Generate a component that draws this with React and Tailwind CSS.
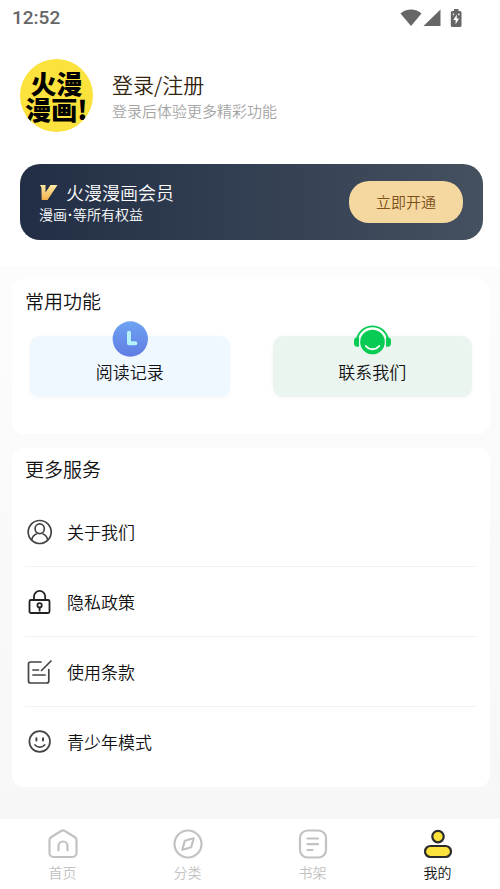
const StatusBar = () => (
  <div className="flex h-9 items-center justify-between pl-3 pr-[37px] text-[#666666]">
    <span className="font-['Roboto',sans-serif] text-[19px] font-medium leading-6">12:52</span>
    <div className="flex items-center" aria-hidden="true">
      <svg width="22" height="18" viewBox="0 0 22 18" fill="currentColor">
        <path d="M11 17 .5 4.5C3.400 2 7 .6 11 .6s7.600 1.400 10.500 3.900Z" />
      </svg>
      <svg className="ml-px" width="18" height="18" viewBox="0 0 18 18" fill="currentColor">
        <path d="M17.500.5V17H.5Z" />
      </svg>
      <svg className="ml-2" width="14" height="18" viewBox="0 0 14 18">
        <path fill="currentColor" d="M5 0h4.500v2H11a1.500 1.500 0 0 1 1.500 1.500v13A1.500 1.500 0 0 1 11 18H3.300a1.500 1.500 0 0 1-1.500-1.500v-13A1.500 1.500 0 0 1 3.300 2H5Z" />
        <path fill="#fff" d="M7.800 5.500 4.300 11h2.300v4.200L10.100 9.500H7.800ZM3.300 4.800h2.200L4.500 6.600ZM8.800 4.800h2.200L9.800 6.800Z" />
      </svg>
    </div>
  </div>
);

const VipIcon = () => (
  <svg width="19" height="18" viewBox="0 0 19 18" aria-hidden="true">
    <defs>
      <linearGradient id="vip" x1="0" y1="0" x2="0" y2="1">
        <stop offset="0" stopColor="#fdeaa5" />
        <stop offset="1" stopColor="#f3b04a" />
      </linearGradient>
    </defs>
    <path fill="url(#vip)" d="M1 2h5.500v7.500L11.500 2h7L16.500 5 8.500 17H2.700L2.400 4.500Z" />
  </svg>
);

const ClockIcon = () => (
  <svg width="40" height="36" viewBox="0 0 40 36" aria-hidden="true">
    <defs>
      <linearGradient id="clock" x1="0" y1="0" x2="0" y2="1">
        <stop offset="0" stopColor="#6ea3f2" />
        <stop offset="1" stopColor="#5f7ce3" />
      </linearGradient>
    </defs>
    <circle cx="20.300" cy="18" r="17.700" fill="url(#clock)" />
    <path d="M19 11.800v10.400h6.400" fill="none" stroke="#b5f3fb" strokeWidth="4" strokeLinecap="round" strokeLinejoin="round" />
  </svg>
);

const SupportIcon = () => (
  <svg width="40" height="36" viewBox="0 0 40 36" aria-hidden="true">
    <g fill="#07cb52">
      <circle cx="20.500" cy="21" r="12.300" />
      <path d="M7 16.200v9.600H5.500A3.500 3.500 0 0 1 2 22.300v-2.600a3.500 3.500 0 0 1 3.500-3.500ZM34 16.200v9.600h1.500a3.500 3.500 0 0 0 3.500-3.500v-2.600a3.500 3.500 0 0 0-3.500-3.500Z" />
    </g>
    <path d="M5.200 17.500a15.700 15.700 0 0 1 30.600 0" fill="none" stroke="#07cb52" strokeWidth="1.800" />
    <path d="M13.800 25c3.500 4.300 9.900 4.300 13.400 0" fill="none" stroke="#fff" strokeWidth="1.800" strokeLinecap="round" />
  </svg>
);

const AboutIcon = () => (
  <svg width="28" height="28" viewBox="-1 0 28 28" fill="none" stroke="#444" strokeWidth="1.700" aria-hidden="true">
    <circle cx="13.700" cy="14" r="11.500" />
    <ellipse cx="13.700" cy="10.800" rx="4.600" ry="4.900" />
    <path d="M5.700 22c.6-3.300 2.500-5.300 5.300-6.200M21.700 22c-.6-3.300-2.500-5.300-5.300-6.200" />
  </svg>
);

const LockIcon = () => (
  <svg width="28" height="28" viewBox="-1 0 28 28" fill="none" stroke="#222" strokeWidth="1.800" aria-hidden="true">
    <rect x="3.500" y="12" width="20" height="13" rx="1.500" />
    <path d="M8 12V8.500a5.600 5.600 0 0 1 11.200 0V12" />
    <circle cx="13.600" cy="17.300" r="2.200" />
    <path d="M13.600 19.500v4" />
  </svg>
);

const TermsIcon = () => (
  <svg width="28" height="28" viewBox="-1 0 28 28" fill="none" stroke="#444" strokeWidth="1.700" strokeLinecap="round" aria-hidden="true">
    <path d="M15 4H4.500a2 2 0 0 0-2 2v17a2 2 0 0 0 2 2h16.300a2 2 0 0 0 2-2V11.500" />
    <path d="M7 12h5.500M7 17h12M15.500 12.500 25 3" />
  </svg>
);

const SmileIcon = () => (
  <svg width="28" height="28" viewBox="-1 0 28 28" fill="none" stroke="#444" strokeWidth="1.700" strokeLinecap="round" aria-hidden="true">
    <circle cx="13.700" cy="13.500" r="10.300" />
    <path d="M10.400 10.300v2.200M17 10.300v2.200" strokeWidth="2" />
    <path d="M9 17c2.600 2.900 7 2.900 9.600 0" />
  </svg>
);

const HomeIcon = () => (
  <svg width="30" height="30" viewBox="0 0 30 30" fill="none" stroke="currentColor" strokeWidth="2.200" strokeLinecap="round" strokeLinejoin="round" aria-hidden="true">
    <path d="M13.500 1.800 3 8.200a3.200 3.200 0 0 0-1.500 2.700V24a4 4 0 0 0 4 4h19a4 4 0 0 0 4-4V10.900A3.200 3.200 0 0 0 27 8.200L16.500 1.800a3 3 0 0 0-3 0Z" />
    <path d="M10.500 21.500v-4.500a4.500 4.500 0 0 1 9 0v4.500" />
  </svg>
);

const CategoryIcon = () => (
  <svg width="30" height="30" viewBox="0 0 30 30" fill="none" stroke="currentColor" strokeWidth="2.200" strokeLinejoin="round" aria-hidden="true">
    <circle cx="15" cy="15" r="13.500" />
    <path d="m20.700 9.300-2.500 9L9.300 20.700l2.500-9Z" />
  </svg>
);

const ShelfIcon = () => (
  <svg width="30" height="30" viewBox="0 0 30 30" fill="none" stroke="currentColor" strokeWidth="2.200" strokeLinecap="round" aria-hidden="true">
    <rect x="2" y="1.500" width="26" height="27" rx="7.500" />
    <path d="M9.500 9.500h10.500M9.500 15.200h10.500M9.500 21h5" />
  </svg>
);

const MineIcon = () => (
  <svg width="30" height="30" viewBox="0 0 30 30" fill="#fce23c" stroke="#2b2b2b" strokeWidth="2.200" aria-hidden="true">
    <circle cx="15" cy="7.600" r="5.700" />
    <rect x="2" y="17" width="26" height="11" rx="5.500" />
  </svg>
);

const shortcuts = [
  { label: '阅读记录', icon: ClockIcon, className: 'bg-[#eff7ff]' },
  { label: '联系我们', icon: SupportIcon, className: 'bg-[#ebf5f0]' },
];

const services = [
  { label: '关于我们', icon: AboutIcon },
  { label: '隐私政策', icon: LockIcon },
  { label: '使用条款', icon: TermsIcon },
  { label: '青少年模式', icon: SmileIcon },
];

const tabs = [
  { label: '首页', icon: HomeIcon },
  { label: '分类', icon: CategoryIcon },
  { label: '书架', icon: ShelfIcon },
  { label: '我的', icon: MineIcon, active: true },
];

const App = () => {
  return (
    <div className="flex min-h-screen flex-col bg-white font-['Noto_Sans_CJK_SC',sans-serif] font-[350] text-[#111111]">
      <header className="pb-[26px]">
        <StatusBar />

        <div className="mt-[23px] flex items-center gap-[19px] pl-5 pr-[17px]">
          <div className="flex size-[73px] shrink-0 items-center justify-center overflow-hidden rounded-full bg-[#fce23c] text-center text-[26px] font-black leading-[26px] text-black">
            <p className="whitespace-nowrap">
              火漫
              <br />
              漫画!
            </p>
          </div>
          <div>
            <button type="button" className="block text-[21px] leading-[30px] text-[#35240d]">登录/注册</button>
            <p className="text-[15px] leading-6 text-[#a5a5a5]">登录后体验更多精彩功能</p>
          </div>
        </div>

        <div className="mt-8 pl-5 pr-[17px]">
          <section className="flex h-[76px] items-center justify-between rounded-[20px] bg-linear-to-r from-[#222e45] to-[#45515f] pl-[19px] pr-5 text-white">
            <div>
              <h2 className="flex items-center gap-2 text-[18px] leading-6">
                <VipIcon />
                火漫漫画会员
              </h2>
              <p className="text-[14px] leading-5">
                漫画<span className="px-px font-['Noto_Sans',sans-serif] font-bold">·</span>等所有权益
              </p>
            </div>
            <button type="button" className="h-[42px] w-[114px] rounded-[20px] bg-[#f4d8a0] text-[15px] text-[#80501c]">
              立即开通
            </button>
          </section>
        </div>
      </header>

      <main className="flex grow flex-col gap-[14px] bg-linear-to-b from-[#fcfcfc] to-[#f7f7f7] pb-8 pl-3 pr-[10px] pt-[13px]">
        <section className="rounded-xl bg-white pb-[37px] pt-2">
          <h2 className="px-[13px] text-[19px] leading-7">常用功能</h2>
          <div className="mt-[21px] grid grid-cols-2 gap-[43px] px-[18px]">
            {shortcuts.map(({ label, icon: Icon, className }) => (
              <button
                key={label}
                type="button"
                className={`relative h-[61px] rounded-[10px] pt-[11px] text-[17px] shadow-[0_1px_4px_rgba(0,0,0,0.04)] ${className}`}
              >
                <span className="absolute -top-[15px] left-1/2 -translate-x-1/2">
                  <Icon />
                </span>
                {label}
              </button>
            ))}
          </div>
        </section>

        <section className="rounded-xl bg-white px-[13px] pb-[11px] pt-[7px]">
          <h2 className="text-[19px] leading-7">更多服务</h2>
          <ul className="mt-[14px] divide-y divide-[#f2f2f2]">
            {services.map(({ label, icon: Icon }) => (
              <li key={label}>
                <button type="button" className="flex h-[69px] w-full items-center gap-[14px] text-[17px]">
                  <Icon />
                  {label}
                </button>
              </li>
            ))}
          </ul>
        </section>
      </main>

      <nav className="grid h-[70px] grid-cols-4 bg-white">
        {tabs.map(({ label, icon: Icon, active }) => (
          <a
            key={label}
            href="#"
            aria-current={active ? 'page' : undefined}
            className={`flex flex-col items-center gap-[3px] pt-[10px] text-[14px] leading-5 ${active ? 'text-[#111111]' : 'text-[#c2c2c2]'}`}
          >
            <Icon />
            {label}
          </a>
        ))}
      </nav>
    </div>
  );
};

export default App;
